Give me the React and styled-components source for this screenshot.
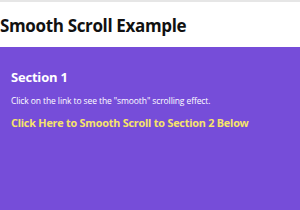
import React from "react";
import styled, { createGlobalStyle } from "styled-components";

const Global = createGlobalStyle`
  html, body { margin: 0; padding: 0; background: #764dd9; }
  body { font-family: "Open Sans", "Noto Sans", sans-serif; }
`;

const Page = styled.div`
  width: 300px;
  height: 210px;
  display: flex;
  flex-direction: column;
  overflow: hidden;
`;

const Header = styled.header`
  background: #ffffff;
  border-top: 2px solid #e6e6e6;
  height: 47px;
  padding-top: 2px;
  display: flex;
  align-items: center;
  box-sizing: border-box;
`;

const Title = styled.h1`
  margin: 0;
  font-size: 17px;
  font-weight: 700;
  color: #111;
  letter-spacing: -0.35px;
`;

const Section = styled.section`
  flex: 1;
  background: #764dd9;
  padding: 21px 11px;
  display: flex;
  flex-direction: column;
`;

const SectionTitle = styled.h2`
  margin: 0;
  font-size: 13px;
  font-weight: 700;
  color: #ffffff;
  line-height: 18px;
  letter-spacing: -0.2px;
`;

const Text = styled.p`
  margin: 9px 0 0;
  font-size: 8.5px;
  color: #ffffff;
  line-height: 12px;
  letter-spacing: -0.1px;
`;

const Link = styled.a`
  margin-top: 9px;
  font-size: 10.8px;
  font-weight: 700;
  color: #f6e46a;
  text-decoration: none;
  line-height: 14px;
  letter-spacing: -0.2px;
`;

export default function App() {
  return (
    <Page>
      <Global />
      <Header>
        <Title>Smooth Scroll Example</Title>
      </Header>
      <Section>
        <SectionTitle>Section 1</SectionTitle>
        <Text>Click on the link to see the "smooth" scrolling effect.</Text>
        <Link href="#section2">Click Here to Smooth Scroll to Section 2 Below</Link>
      </Section>
    </Page>
  );
}
